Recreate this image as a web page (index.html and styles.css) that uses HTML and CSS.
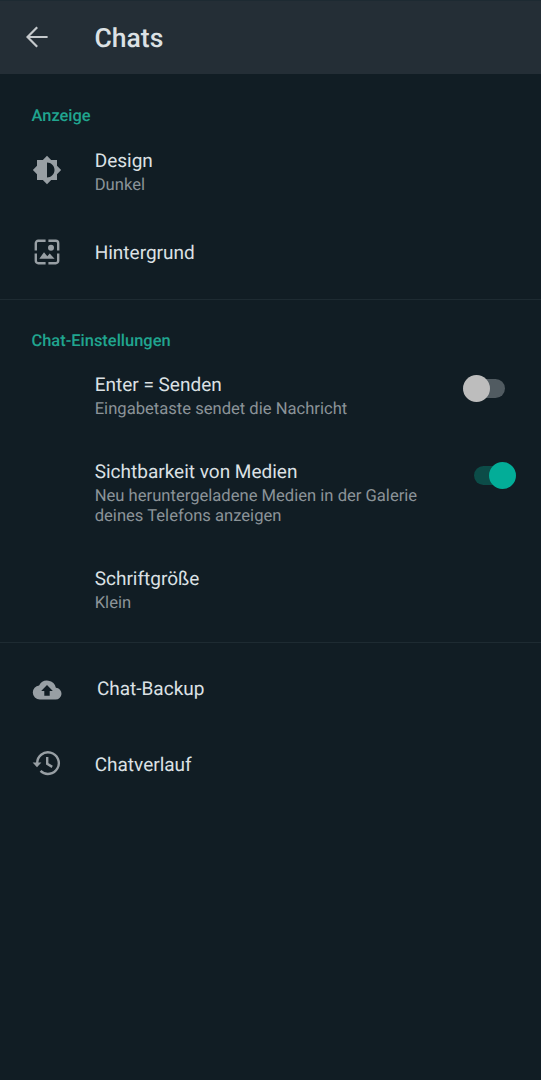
FILE: index.html
```html
<!DOCTYPE html>
<html lang="de">
<head>
<meta charset="utf-8">
<title>Chats</title>
<link rel="stylesheet" href="styles.css">
</head>
<body>
<header class="topbar">
  <svg class="back" viewBox="0 0 22 22"><path d="M21.6 11H1.8M11.2 1.2L1.5 11l9.7 9.8"/></svg>
  <h1 class="heading">Chats</h1>
</header>
<main>
  <section class="group display">
    <h2 class="label">Anzeige</h2>
    <div class="row design">
      <svg class="icon" viewBox="0 0 24 24"><path d="M20 15.31L23.31 12 20 8.69V4h-4.69L12 .69 8.69 4H4v4.69L.69 12 4 15.31V20h4.69L12 23.31 15.31 20H20v-4.69zM12 18V6c3.31 0 6 2.69 6 6s-2.69 6-6 6z"/></svg>
      <div class="text"><div class="title">Design</div><div class="sub">Dunkel</div></div>
    </div>
    <div class="row wallpaper">
      <svg class="icon" viewBox="0 0 30 30"><path class="line" d="M13.6 3.8H6.2a2.4 2.4 0 0 0-2.4 2.4v7.4M16.4 3.8h7.4a2.4 2.4 0 0 1 2.4 2.4v7.4M26.2 16.4v7.4a2.4 2.4 0 0 1-2.4 2.4h-7.4M13.6 26.2H6.2a2.4 2.4 0 0 1-2.4-2.4v-7.4"/><circle cx="19" cy="10.8" r="3"/><path d="M7.3 21.7l4.7-6.5 3.3 4.1 2.4-2.7 4.9 5.1z"/></svg>
      <div class="text"><div class="title">Hintergrund</div></div>
    </div>
  </section>
  <section class="group settings">
    <h2 class="label">Chat-Einstellungen</h2>
    <div class="row enter">
      <div class="text"><div class="title">Enter = Senden</div><div class="sub">Eingabetaste sendet die Nachricht</div></div>
      <div class="switch off"><span class="thumb"></span></div>
    </div>
    <div class="row media">
      <div class="text"><div class="title">Sichtbarkeit von Medien</div><div class="sub">Neu heruntergeladene Medien in der Galerie<br>deines Telefons anzeigen</div></div>
      <div class="switch on"><span class="thumb"></span></div>
    </div>
    <div class="row size">
      <div class="text"><div class="title">Schriftgröße</div><div class="sub">Klein</div></div>
    </div>
  </section>
  <section class="group storage">
    <div class="row backup">
      <svg class="icon" viewBox="0 0 30 30"><path d="M23.9 11.8A9 9 0 0 0 7.1 9.4 7.1 7.1 0 0 0 .8 16.5a7.1 7.1 0 0 0 7.1 7.1h15.4a5.9 5.9 0 0 0 .6-11.8zM17.7 15v4.8h-5.4V15H9.2L15 8.9l5.8 6.1z"/></svg>
      <div class="text"><div class="title">Chat-Backup</div></div>
    </div>
    <div class="row history">
      <svg class="icon" viewBox="0 0 30 30"><path class="ring" d="M5.2 15.5A10.8 10.8 0 1 1 8.5 22.9"/><path d="M.6 14.5h8.8L5 19.3z"/><path class="hand" d="M15.2 9v6.9l5 3"/></svg>
      <div class="text"><div class="title">Chatverlauf</div></div>
    </div>
  </section>
</main>
</body>
</html>
```
FILE: styles.css
```css
* { box-sizing: border-box; }
body {
  margin: 0;
  min-height: 1080px;
  background: #111d24;
  color: #dce1e4;
  font-family: Roboto, "Liberation Sans", sans-serif;
  text-rendering: geometricPrecision;
}
.topbar {
  display: flex;
  align-items: center;
  height: 74px;
  padding: 0 0 1px 26px;
  background: #242e36;
  border-top: 1px solid #1d2a32;
}
.back {
  width: 22px;
  height: 22px;
  margin: 0 46.5px 0 0;
  fill: none;
  stroke: #c5c9cc;
  stroke-width: 2.2;
}
.heading {
  margin: 4px 0 0;
  font-size: 26.5px;
  font-weight: 500;
  line-height: 32px;
}
.group { display: flex; flex-direction: column; }
.group + .group { border-top: 1px solid #1e2b32; }
.display { height: 225px; padding-top: 33px; }
.settings { height: 343px; padding-top: 32px; }
.storage { padding-top: 32px; }
.label {
  margin: 0 0 0 31.5px;
  color: #20a58f;
  font-size: 16.45px;
  font-weight: 500;
  line-height: 20px;
}
.row {
  display: flex;
  align-items: flex-start;
  padding-left: 94.7px;
}
.row:has(.icon) { padding-left: 32.3px; }
.icon {
  flex: none;
  width: 30px;
  height: 30px;
  margin-right: 32.4px;
  fill: #989fa4;
}
.text { flex: 1; }
.title { font-size: 19px; line-height: 28px; white-space: nowrap; }
.sub { padding-top: 1px; color: #8b9398; font-size: 16.6px; line-height: 19.6px; white-space: nowrap; }
.design { margin-top: 20px; }
.design .icon { margin-top: 8px; }
.wallpaper { margin-top: 43.4px; }
.wallpaper .icon { margin-top: -2px; }
.line, .ring, .hand { fill: none; stroke: #989fa4; stroke-width: 2.4; }
.enter { margin-top: 19px; }
.media { margin-top: 38.4px; }
.size { margin-top: 38.8px; }
.backup .icon { margin: 1px 34.6px 0 0; }
.history { margin-top: 45px; }
.history .icon { margin-top: -2.6px; }
.switch {
  display: flex;
  align-items: center;
  height: 19px;
  border-radius: 10px;
}
.thumb { width: 27px; height: 27px; border-radius: 50%; }
.off { width: 40px; margin: 7.5px 36px 0 0; background: #515b61; }
.off .thumb { margin-left: -2px; background: #bdbdbd; }
.on { width: 40px; margin: 8px 27.5px 0 0; background: #0c4c48; justify-content: flex-end; }
.on .thumb { margin-right: -2px; background: #03ad98; }
```
